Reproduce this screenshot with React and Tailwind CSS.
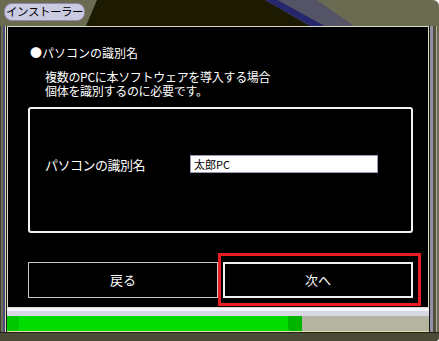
export default function App() {
  return (
    <div className="w-[439px] h-[341px] bg-white font-['Noto_Sans_CJK_JP','Noto_Sans',sans-serif]">
      <div className="flex h-full flex-col overflow-hidden rounded-tr-[6px] rounded-br-[4px] bg-[#6b6b52]">
        {/* title bar */}
        <div className="relative h-[26px] shrink-0">
          <svg className="absolute left-0 top-0" width="439" height="26" viewBox="0 0 439 26">
            <polygon points="97,0 265,0 310,26 86,26" fill="#1c1a00" />
            <polygon points="265,0 278,0 325,26 310,26" fill="#26266c" />
            <polygon points="278,0 317,0 354,26 325,26" fill="#545466" />
          </svg>
          <div className="relative ml-[4px] mt-[3px] flex h-[18px] w-[81px] items-center justify-center whitespace-nowrap rounded-[8px] border border-[#8c8ca8] bg-[#cacae2] text-[11.5px] leading-none tracking-[-0.5px] text-black">
            インストーラー
          </div>
        </div>

        <div className="flex flex-1">
          <div className="w-[7px] bg-[linear-gradient(90deg,#3e3e30_0_1px,#70705a_1px_3px,#4a4a7a_3px_5px,#d6d6b0_5px_6px,#202018_6px_7px)]" />

          <div className="flex flex-1 flex-col">
            {/* main panel */}
            <div className="h-[282px] border border-[#dcdcc4] bg-black text-white">
              <div className="pl-[22px] pt-[18px] text-[12px] leading-[16px]">●パソコンの識別名</div>
              <div className="mt-[9px] pl-[37px] text-[12px] leading-[14px] tracking-[-0.3px]">
                <div>複数のPCに本ソフトウェアを導入する場合</div>
                <div>個体を識別するのに必要です。</div>
              </div>

              <div className="mt-[9px] ml-[20px] mr-[15px] h-[126px] rounded-[3px] border-2 border-[#f2f2f2] pl-[15px] pt-[46px]">
                <div className="flex h-[18px] items-center">
                  <div className="w-[145px] text-[13px] leading-none tracking-[-0.5px]">パソコンの識別名</div>
                  <input
                    readOnly
                    defaultValue="太郎PC"
                    className="h-[18px] w-[188px] border border-[#9a9ab4] bg-white px-[3px] text-[11px] text-black outline-none"
                  />
                </div>
              </div>

              <div className="mt-[20px] ml-[20px] flex items-center">
                <div className="flex h-[36px] w-[190px] items-center justify-center border border-[#c8c8c8] text-[13px]">
                  戻る
                </div>
                <div className="border-[3px] border-[#ec1c24] pt-[6px] pl-[2px] pr-[5px] pb-[5px]">
                  <div className="flex h-[36px] w-[190px] items-center justify-center border-2 border-[#f0f0f0] text-[13px]">
                    次へ
                  </div>
                </div>
              </div>
            </div>

            {/* progress */}
            <div className="h-[3px] bg-[#f4f4ff]" />
            <div className="h-[5px] bg-[#d8d8e4]" />
            <div className="flex h-[15px]">
              <div className="flex w-[295px] justify-between bg-[#00dc00]">
                <div className="w-[12px] rounded-bl-[4px] bg-[#00c800]" />
                <div className="w-[14px] rounded-bl-[4px] bg-[#00b400]" />
              </div>
              <div className="flex-1 bg-[#b4b4a0]" />
            </div>
            <div className="h-[1px] bg-[#e0e0a8]" />
          </div>

          <div className="w-[10px] bg-[linear-gradient(90deg,#1a1a10_0_1px,#9090a8_1px_4px,#50503c_4px_7px,#b0b0a0_7px_8px,#6b6b52_8px_10px)]" />
        </div>

        <div className="h-[9px] shrink-0 border-t border-[#202018] bg-[#4a4a36]" />
      </div>
    </div>
  )
}
